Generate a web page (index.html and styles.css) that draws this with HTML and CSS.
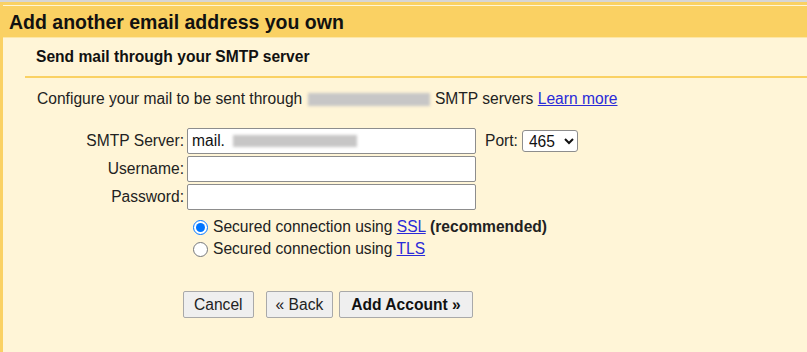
FILE: index.html
```html
<!DOCTYPE html>
<html lang="en">
<head>
  <meta charset="UTF-8" />
  <title>Add another email address you own</title>
  <link rel="stylesheet" href="styles.css">
</head>
<body>
<div class="topline"></div>
<div class="frame">
  <h1 class="title">Add another email address you own</h1>

  <div class="content">
    <h2 class="subtitle">Send mail through your SMTP server</h2>

    <p class="intro">
      Configure your mail to be sent through <span class="redacted intro-redacted"></span> SMTP servers
      <a href="#">Learn more</a>
    </p>

    <div class="form">
      <label class="label" for="smtpServer">SMTP Server:</label>
      <div class="field-wrap">
        <input type="text" id="smtpServer" class="field" value="mail.">
        <span class="redacted field-redacted"></span>
      </div>
      <div class="port">
        <label for="port">Port:</label>
        <select id="port" class="port-select">
          <option>465</option>
          <option>587</option>
          <option>25</option>
        </select>
      </div>

      <label class="label" for="username">Username:</label>
      <input type="text" id="username" class="field">
      <div></div>

      <label class="label" for="password">Password:</label>
      <input type="password" id="password" class="field">
      <div></div>

      <div></div>
      <div class="options">
        <label class="option">
          <input type="radio" name="security" checked>
          <span>Secured connection using <a href="#">SSL</a> <b>(recommended)</b></span>
        </label>
        <label class="option">
          <input type="radio" name="security">
          <span>Secured connection using <a href="#">TLS</a></span>
        </label>
      </div>
    </div>

    <div class="actions">
      <button class="button">Cancel</button>
      <button class="button back">&laquo; Back</button>
      <button class="button primary">Add Account &raquo;</button>
    </div>
  </div>
</div>
</body>
</html>
```

FILE: styles.css
```css
:root {
  --yellow: #fad163;
  --cream: #fff5d7;
  --text-color: #222;
  --link-color: #2a2ad8;
  --field-border: #8d8d8d;
}

html, body {
  margin: 0;
  padding: 0;
}

body {
  font-family: "Liberation Sans", Arial, sans-serif;
  font-size: 15.6px;
  color: var(--text-color);
  background-color: var(--cream);
  overflow: hidden;
}

.topline {
  height: 2px;
  background-color: #d6d6d6;
}

.frame {
  min-height: calc(100vh - 2px);
  border-top: 3px solid var(--yellow);
  border-left: 3px solid var(--yellow);
  padding-top: 1px;
  background-color: var(--cream);
  box-sizing: border-box;
}

.title {
  margin: 0;
  height: 32px;
  line-height: 32px;
  padding-left: 6px;
  font-size: 19.5px;
  font-weight: bold;
  color: #111;
  background-color: var(--yellow);
  border-bottom: 1px solid #fde7a6;
  box-sizing: border-box;
}

.content {
  margin-left: 22px;
}

.subtitle {
  margin: 0;
  height: 40px;
  line-height: 38px;
  padding-left: 11px;
  font-size: 15.6px;
  font-weight: bold;
  color: #111;
  border-bottom: 2px solid var(--yellow);
  box-sizing: border-box;
}

.intro {
  margin: 12px 0 0;
  padding-left: 12px;
  line-height: 18px;
}

a {
  color: var(--link-color);
}

.redacted {
  display: inline-block;
  background-color: #c7c6c6;
  filter: blur(1.5px);
}

.intro-redacted {
  width: 122px;
  height: 13px;
  vertical-align: -2px;
  margin: 0 1px;
}

.form {
  display: grid;
  grid-template-columns: 159px 289px auto;
  column-gap: 3px;
  row-gap: 2px;
  align-items: center;
  margin-top: 20px;
}

.label {
  text-align: right;
}

.field-wrap {
  position: relative;
  height: 26px;
}

.field {
  display: block;
  width: 289px;
  height: 26px;
  margin: 0;
  padding: 0 4px;
  border: 1px solid var(--field-border);
  border-radius: 2px;
  background: white;
  font-family: inherit;
  font-size: 15.6px;
  color: #111;
  box-sizing: border-box;
}

.field-redacted {
  position: absolute;
  left: 46px;
  top: 7px;
  width: 124px;
  height: 12px;
}

.port {
  margin-left: 6px;
  display: flex;
  align-items: center;
  gap: 4px;
}

.port-select {
  width: 56px;
  height: 22px;
  margin: 0;
  padding: 0 2px;
  border: 1px solid var(--field-border);
  border-radius: 3px;
  background: white;
  font-family: inherit;
  font-size: 15.6px;
  color: #111;
}

.options {
  grid-column: 2 / 4;
  margin-top: 4px;
  white-space: nowrap;
}

.option {
  display: flex;
  align-items: center;
  height: 22px;
}

.option input {
  width: 15px;
  height: 15px;
  margin: 0 5px 0 6px;
}

.actions {
  display: flex;
  gap: 6px;
  margin: 31px 0 0 158px;
}

.button {
  height: 27px;
  padding: 0 10px;
  border: 1px solid #a9a9a9;
  border-radius: 2px;
  background-color: #efefef;
  font-family: inherit;
  font-size: 15.6px;
  color: #222;
  cursor: pointer;
}

.button.back {
  margin-left: 6px;
  padding: 0 9px;
}

.button.primary {
  font-weight: bold;
  color: #111;
  padding: 0 11px;
}
```
